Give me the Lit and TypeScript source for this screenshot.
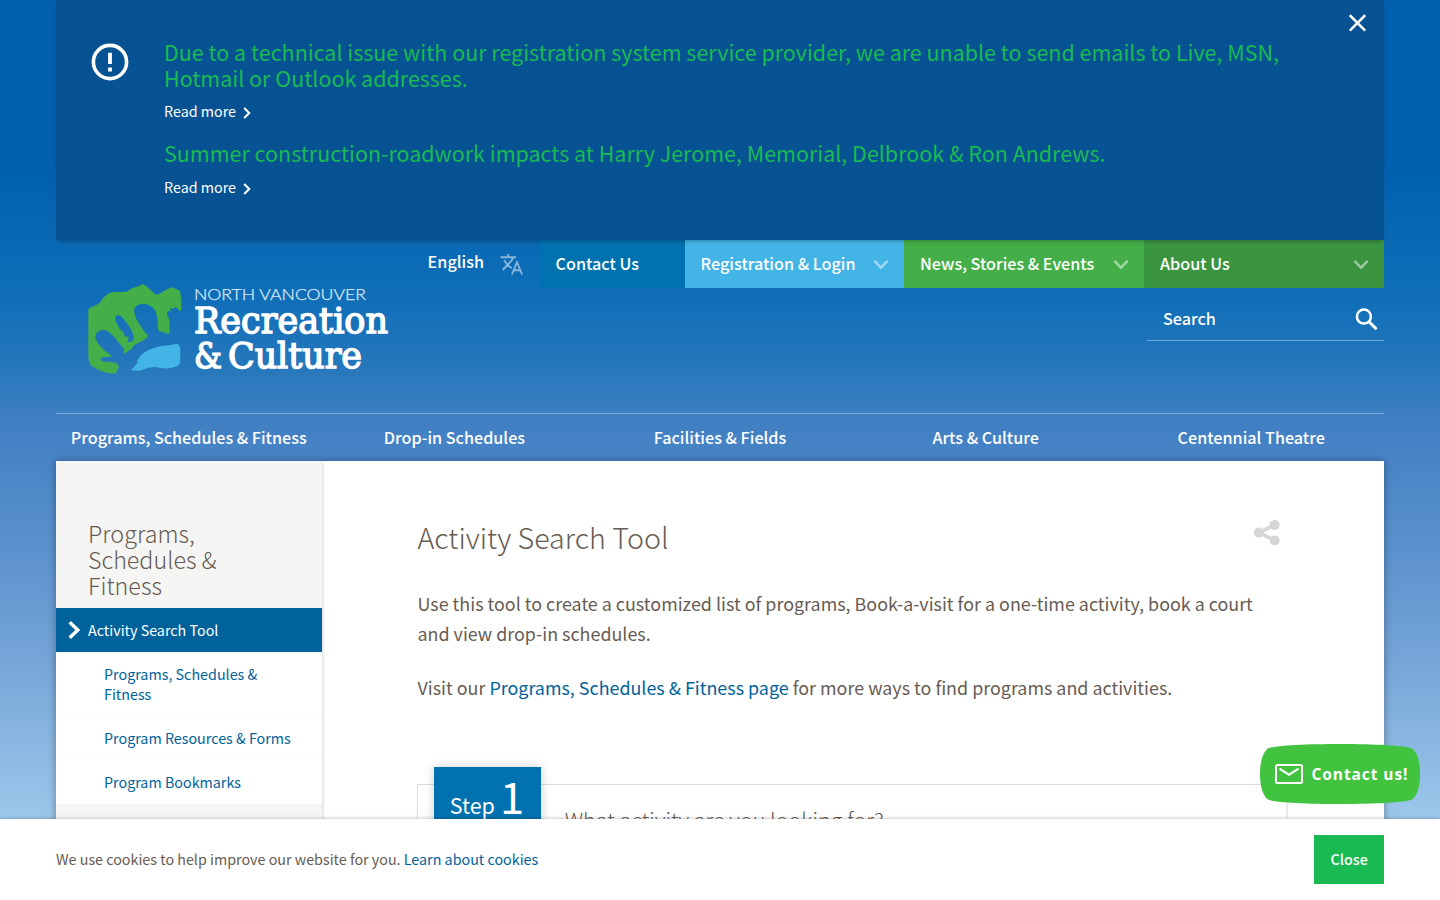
import { LitElement, html, svg, css } from "lit";
import { customElement } from "lit/decorators.js";
import { classMap } from "lit/directives/class-map.js";

const chevronDown = html`<svg class="chev" width="14" height="9" viewBox="0 0 14 9"><path d="M.3 .9 7 7.600 13.700 .9" fill="none" stroke="#fff" stroke-width="2.5"/></svg>`;
const chevronRight = html`<svg class="more-icon" width="8" height="12" viewBox="0 0 8 12"><path d="M1.2 1 6.2 6 1.2 11" fill="none" stroke="#fff" stroke-width="2.1"/></svg>`;

const logoMark = svg`
  <g transform="translate(-8 -9) scale(.33333)">
    <path fill="#44af48" fill-rule="evenodd" d="M25 101C40 93 50 92 62 80C72 66 82 54 98 52C115 49 135 54 145 47C158 35 172 38 188 27L198 33L228 59C238 60 258 42 276 37L300 47Q306 75 304 104L301 108L296 106Q291 96 285 97L279 103L272 98L270 104L275 108L262 109L261 116Q269 130 269 150L268 178L235 167C233 150 234 130 227 110C215 82 172 80 163 100C158 125 185 160 205 184C190 200 178 200 160 213C156 226 142 226 135 237L129 235L133 222C115 205 95 168 72 165C55 163 42 180 47 190C55 215 80 232 97 243C85 248 70 245 61 250C60 262 75 260 90 261C110 261 120 270 115 280L107 295C85 298 50 285 32 270Q25 262 25 240ZM105 128C108 118 120 118 128 128C145 150 165 175 161 192C158 202 148 202 143 200L146 186L134 184C132 172 128 166 118 162L115 152Q105 140 105 128Z"/>
    <path fill="#43b4e6" d="M153 286L172 264L172 256C176 250 178 246 184 240C200 225 230 213 265 211L293 206Q301 212 301 230Q302 250 299 268C285 280 260 284 225 276C205 276 190 286 172 287Z"/>
  </g>`;

@customElement("app-root")
export class AppRoot extends LitElement {
  static styles = css`
    :host {
      display: block; position: relative; width: 100%; height: 900px; overflow: hidden;
      font-family: "Noto Sans CJK JP", "Noto Sans", sans-serif; font-size: 14.32px; line-height: 20px; color: #675c53;
      background: linear-gradient(#005fae 0, #005fae 155px, #106fb8 300px, #2577bb 365px, #407fc3 420px, #5a91cd 545px, #7ba9da 680px, #9cc8eb 820px);
    }
    * { box-sizing: border-box; }
    h1, h2, p { margin: 0; font-weight: 400; }
    a { color: #00629b; text-decoration: none; }
    svg { display: block; flex: none; }
    .wrap { width: 1328px; margin: 0 auto; }
    .notice { position: relative; z-index: 1; display: flex; height: 240px; background: #065292; box-shadow: 0 3px 4px -2px rgba(0,0,0,.3); }
    .notice-icon { margin: 43px 35px 0; }
    .notice-body { flex: 1; padding-top: 39px; }
    .notice-close { margin: 14px 18px 0 0; }
    .alert { width: 1130px; font-size: 21.48px; line-height: 26px; color: #1aba52; }
    .more { display: flex; align-items: center; color: #fff; margin: 10px 0 19px; }
    .more-icon { margin: 3px 0 0 7px; }
    .alert + .more.second { margin-top: 11px; }
    .header { display: flex; justify-content: space-between; height: 173px; font-size: 16.17px; font-weight: 500; color: #fff; }
    .logo { margin: 44px 0 0 32px; overflow: visible; }
    .north { font: 300 15.3px Lato, sans-serif; fill: #dceaf6; stroke: #dceaf6; stroke-width: .25px; }
    .slab { font: 400 35.5px "DejaVu Serif", serif; fill: #fff; stroke: #fff; stroke-width: 1.5px; }
    .tools { display: flex; flex-direction: column; align-items: flex-end; }
    .tabs { display: flex; height: 48px; line-height: 46px; }
    .lang { display: flex; width: 112px; line-height: 42px; }
    .lang svg { margin: 13px 0 0 16px; opacity: .5; }
    .tab { display: flex; justify-content: space-between; padding: 0 16px; }
    .chev { margin-top: 20px; opacity: .5; }
    .contact { width: 145px; background: #0072b0; }
    .reg { width: 219.4px; background: #43b4e6; }
    .news { width: 240px; background: #44af48; }
    .about { width: 240px; background: #3b943f; }
    .search { display: flex; justify-content: space-between; width: 237px; height: 53px; padding: 20px 6px 0 16px; border-bottom: 1px solid rgba(255,255,255,.35); }
    .nav { display: grid; grid-template-columns: repeat(5, 1fr); height: 48px; border-top: 1px solid rgba(255,255,255,.35); font-size: 16.17px; font-weight: 500; line-height: 47px; text-align: center; color: #fff; }
    .page { display: flex; height: 500px; background: #fff; box-shadow: 0 0 8px rgba(0,0,0,.35); }
    .side { width: 265.6px; background: #f5f5f3; box-shadow: 0 0 4px rgba(0,0,0,.25); clip-path: inset(0 -5px 0 0); }
    .side h2 { padding: 59px 90px 10px 32px; font-size: 23.3px; font-weight: 300; line-height: 26px; height: 147px; }
    .active { display: flex; align-items: center; height: 44px; padding-left: 12px; background: #00629b; color: #fff; }
    .active svg { margin-right: 8px; }
    .sub { display: block; padding: 12px 28px 12px 48px; background: #fff; box-shadow: inset 0 -1px #fdfdfd; }
    .main { flex: 1; padding: 56px 96.500px 0 95.9px; }
    .title { display: flex; justify-content: space-between; height: 71px; }
    h1 { font-size: 28.65px; font-weight: 300; line-height: 40px; }
    .share { margin: 3px 7.500px 0 0; }
    .text { font-size: 17.9px; line-height: 30px; margin-bottom: 24px; }
    .step { display: flex; height: 100px; margin-top: 82px; border: 1px solid #dcdcdc; border-width: 1px 2px 0 1px; border-right-color: #ececec; }
    .badge { display: flex; align-items: baseline; width: 107px; height: 90px; margin: -18px 0 0 15.2px; padding-left: 16px; background: #0072b0; color: #fff; box-shadow: 0 0 10px rgba(0,0,0,.2); font-size: 21.47px; line-height: 57px; }
    .badge b { font-weight: 400; font-size: 43.5px; margin-left: 5px; }
    .question { margin: 22px 0 0 24px; font-size: 21.5px; font-weight: 300; line-height: 26px; }
    .cookies { position: absolute; inset: 819px 0 0; background: #fff; box-shadow: 0 0 4px rgba(0,0,0,.3); }
    .cookies .wrap { display: flex; justify-content: space-between; padding-top: 16px; }
    .cookies p { margin-top: 14px; }
    .close { width: 69.6px; height: 49px; background: #1aba52; color: #fff; font-weight: 500; line-height: 48px; text-align: center; }
    .chat { position: absolute; left: 1260px; top: 744px; }
    .chat text { font: 700 15.5px "Open Sans", sans-serif; fill: #fff; }
  `;

  private tabs = [
    { label: "Contact Us", kind: "contact" },
    { label: "Registration & Login", kind: "reg" },
    { label: "News, Stories & Events", kind: "news" },
    { label: "About Us", kind: "about" },
  ];
  private nav = ["Programs, Schedules & Fitness", "Drop-in Schedules", "Facilities & Fields", "Arts & Culture", "Centennial Theatre"];
  private links = ["Programs, Schedules & Fitness", "Program Resources & Forms", "Program Bookmarks"];

  render() {
    return html`
      <section class="notice wrap">
        <svg class="notice-icon" width="38" height="38" viewBox="0 0 38 38"><circle cx="19" cy="19" r="16.6" fill="none" stroke="#fff" stroke-width="3.6"/><path d="M17.1 9.8h3.8v11.3h-3.8zM17.1 24.6h3.8v3.8h-3.8z" fill="#fff"/></svg>
        <div class="notice-body">
          <p class="alert">Due to a technical issue with our registration system service provider, we are unable to send emails to Live, MSN, Hotmail or Outlook addresses.</p>
          <div class="more">Read more${chevronRight}</div>
          <p class="alert">Summer construction-roadwork impacts at Harry Jerome, Memorial, Delbrook &amp; Ron Andrews.</p>
          <div class="more second">Read more${chevronRight}</div>
        </div>
        <svg class="notice-close" width="17" height="18" viewBox="0 0 17 18"><path d="M.8 1.2 16.200 16.6M16.200 1.2 .8 16.6" stroke="#fff" stroke-width="2.5"/></svg>
      </section>
      <header class="header wrap">
        <svg class="logo" width="310" height="92" viewBox="0 0 310 92">
          ${logoMark}
          <text class="north" x="106" y="15.500" textLength="172" lengthAdjust="spacingAndGlyphs">NORTH VANCOUVER</text>
          <text class="slab" x="106" y="48.800" textLength="194" lengthAdjust="spacingAndGlyphs">Recreation</text>
          <text class="slab" x="106" y="84" textLength="28" lengthAdjust="spacingAndGlyphs">&amp;</text>
          <text class="slab" x="140" y="84" textLength="134" lengthAdjust="spacingAndGlyphs">Culture</text>
        </svg>
        <div class="tools">
          <div class="tabs">
            <div class="lang">English
              <svg width="24" height="22" viewBox="0 0 24 22"><path d="M.5 4.2h15.5M8.2 1v3.2M2.7 17 11.5 7.6Q12.9 5.8 13.2 4.2M4.1 7.2Q6.5 12 11.7 15M11.9 21.5 17 9.2 22.1 21.5M13.7 17.2h6.6" fill="none" stroke="#fff" stroke-width="1.9"/></svg>
            </div>
            ${this.tabs.map((t) => html`<div class=${classMap({ tab: true, [t.kind]: true })}><span>${t.label}</span>${t.kind === "contact" ? "" : chevronDown}</div>`)}
          </div>
          <div class="search"><span>Search</span>
            <svg width="23" height="23" viewBox="0 0 23 23"><circle cx="8.900" cy="8.600" r="7" fill="none" stroke="#fff" stroke-width="2.5"/><path d="M14 13.700 21.600 21.300" stroke="#fff" stroke-width="3"/></svg>
          </div>
        </div>
      </header>
      <nav class="nav wrap">${this.nav.map((n) => html`<span>${n}</span>`)}</nav>
      <div class="page wrap">
        <aside class="side">
          <h2>Programs, Schedules &amp; Fitness</h2>
          <div class="active"><svg width="12" height="18" viewBox="0 0 12 18"><path d="M1.7 1.3 9.7 9 1.7 16.7" fill="none" stroke="#fff" stroke-width="3.4"/></svg>Activity Search Tool</div>
          ${this.links.map((l) => html`<a class="sub">${l}</a>`)}
        </aside>
        <main class="main">
          <div class="title">
            <h1>Activity Search Tool</h1>
            <svg class="share" width="26" height="26" viewBox="0 0 26 26"><g fill="#d6d6d6"><circle cx="5" cy="12.6" r="5"/><circle cx="20.6" cy="5" r="5"/><circle cx="20.6" cy="20.4" r="5"/></g><path d="M20.6 5 5 12.6 20.6 20.4" fill="none" stroke="#d6d6d6" stroke-width="3.6"/></svg>
          </div>
          <p class="text">Use this tool to create a customized list of programs, Book-a-visit for a one-time activity, book a court and view drop-in schedules.</p>
          <p class="text">Visit our <a>Programs, Schedules &amp; Fitness page</a> for more ways to find programs and activities.</p>
          <section class="step">
            <div class="badge">Step<b>1</b></div>
            <h2 class="question">What activity are you looking for?</h2>
          </section>
        </main>
      </div>
      <footer class="cookies">
        <div class="wrap">
          <p>We use cookies to help improve our website for you. <a>Learn about cookies</a></p>
          <div class="close">Close</div>
        </div>
      </footer>
      <svg class="chat" width="160" height="60" viewBox="0 0 160 60">
        <path d="M0 30C0 17 3 8 8 4.500C14 1.500 45 0 80 0S146 1.500 152 4.500C157 8 160 17 160 30S157 52 152 55.500C146 58.500 115 60 80 60S14 58.500 8 55.500C3 52 0 43 0 30Z" fill="#41c340"/>
        <rect x="16" y="21" width="26" height="18" rx="1.500" fill="none" stroke="#fff" stroke-width="2"/>
        <path d="M19.500 24.700 29 30.700 38.500 24.700" fill="none" stroke="#fff" stroke-width="2"/>
        <text x="51.500" y="36" textLength="96" lengthAdjust="spacing">Contact us!</text>
      </svg>
    `;
  }
}
